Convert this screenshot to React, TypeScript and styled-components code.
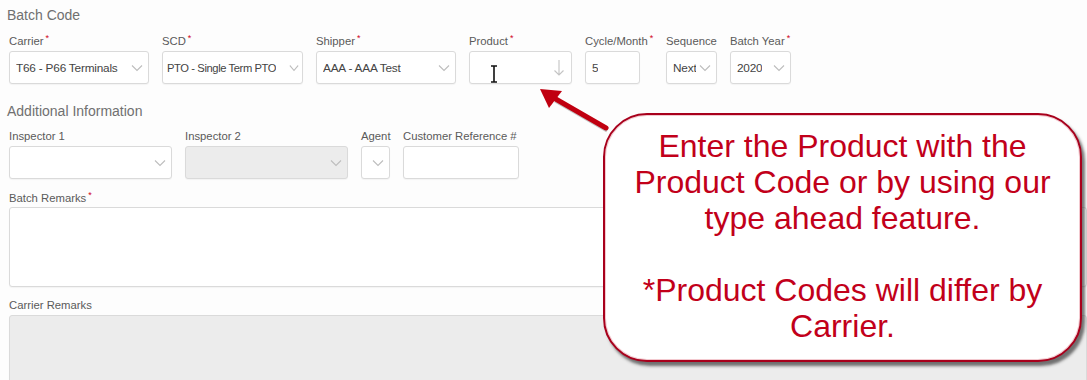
import styled, { createGlobalStyle } from "styled-components";

const GlobalStyle = createGlobalStyle`
  html, body {
    margin: 0;
    padding: 0;
    background: #fdfdfd;
  }
  body {
    font-family: "Liberation Sans", Arial, sans-serif;
  }
`;

const Page = styled.div`
  position: relative;
  width: 1087px;
  height: 380px;
  overflow: hidden;
  box-sizing: border-box;
  padding: 6px 0 0 9px;
  background: #fdfdfd;
`;

const SectionTitle = styled.div<{ $top: number }>`
  margin: ${(p) => p.$top}px 0 0 -2px;
  font-size: 14px;
  line-height: 18px;
  color: #707070;
`;

const Row = styled.div<{ $top: number }>`
  display: flex;
  gap: 13px;
  margin-top: ${(p) => p.$top}px;
`;

const Field = styled.div<{ $w: number }>`
  width: ${(p) => p.$w}px;
  display: flex;
  flex-direction: column;
`;

const Block = styled.div<{ $top: number }>`
  display: flex;
  flex-direction: column;
  margin-top: ${(p) => p.$top}px;
`;

const Label = styled.label<{ $gap?: number }>`
  font-size: 11.3px;
  line-height: 14px;
  color: #5a5a5a;
  white-space: nowrap;
  margin-bottom: ${(p) => p.$gap ?? 3}px;
`;

const Req = styled.span`
  color: #d0021b;
  font-size: 9px;
  line-height: 9px;
  vertical-align: top;
  margin-left: 2px;
`;

const Box = styled.div<{ $w?: number; $h?: number; $disabled?: boolean; $tight?: boolean }>`
  position: relative;
  box-sizing: border-box;
  width: ${(p) => (p.$w ? `${p.$w}px` : "100%")};
  height: ${(p) => p.$h ?? 33}px;
  display: flex;
  align-items: center;
  padding: 0 ${(p) => (p.$tight ? 3 : 5)}px 0 ${(p) => (p.$tight ? 4 : 6)}px;
  border: 1px solid #dadada;
  border-radius: 3px;
  background: ${(p) => (p.$disabled ? "#ececec" : "#fff")};
  box-shadow: 0 1px 1px rgba(0, 0, 0, 0.04);
  font-size: ${(p) => (p.$tight ? 11.2 : 11.8)}px;
  color: #444;
`;

const Value = styled.span<{ $tight?: boolean }>`
  flex: 0 1 auto;
  min-width: 0;
  overflow: hidden;
  white-space: nowrap;
  letter-spacing: ${(p) => (p.$tight ? -0.4 : -0.2)}px;
`;

const Caret = styled.svg`
  flex-shrink: 0;
  margin-left: auto;
`;

const Cursor = styled.svg`
  position: absolute;
  left: 20px;
  top: 13px;
`;

const Arrow = styled.svg`
  position: absolute;
  left: 530px;
  top: 80px;
`;

const Callout = styled.div`
  position: absolute;
  left: 603px;
  top: 113px;
  width: 479px;
  height: 249px;
  box-sizing: border-box;
  padding-top: 13px;
  border: 2px solid #a8001c;
  border-radius: 44px;
  background: #fff;
  box-shadow: 3px 4px 3px rgba(60, 60, 60, 0.7), inset 0 0 0 1px #f3c9cf;
  text-align: center;
  color: #c2001a;
  font-size: 32px;
  line-height: 36px;
`;

const Chevron = ({ w = 12 }: { w?: number }) => (
  <Caret width={w} height="8" viewBox="0 0 12 8" preserveAspectRatio="none">
    <path d="M1 1.5 L6 6.5 L11 1.5" fill="none" stroke="#bdbdbd" strokeWidth="1.1" />
  </Caret>
);

const DownArrow = () => (
  <Caret width="12" height="18" viewBox="0 0 12 18" style={{ marginRight: 1 }}>
    <path d="M6 1 V16 M1.5 11.5 L6 16 L10.5 11.5" fill="none" stroke="#c4c4c4" strokeWidth="1.1" />
  </Caret>
);

type SelectProps = {
  label: string;
  w: number;
  box?: number;
  value?: string;
  req?: boolean;
  disabled?: boolean;
  tight?: boolean;
};

const Select = ({ label, w, box, value, req, disabled, tight }: SelectProps) => (
  <Field $w={w}>
    <Label>
      {label}
      {req && <Req>*</Req>}
    </Label>
    <Box $w={box} $disabled={disabled} $tight={tight}>
      {value && <Value $tight={tight}>{value}</Value>}
      <Chevron w={tight ? 10 : 12} />
    </Box>
  </Field>
);

export default function App() {
  return (
    <>
      <GlobalStyle />
      <Page>
        <SectionTitle $top={0}>Batch Code</SectionTitle>
        <Row $top={10}>
          <Select label="Carrier" req w={140} value="T66 - P66 Terminals" />
          <Select label="SCD" req w={141} value="PTO - Single Term PTO" tight />
          <Select label="Shipper" req w={140} value="AAA - AAA Test" />
          <Field $w={103}>
            <Label>
              Product<Req>*</Req>
            </Label>
            <Box>
              <Cursor width="8" height="18" viewBox="0 0 8 18">
                <path d="M1 1 H7 M4 1 V17 M1 17 H7" fill="none" stroke="#111" strokeWidth="1.6" />
              </Cursor>
              <DownArrow />
            </Box>
          </Field>
          <Field $w={68}>
            <Label>
              Cycle/Month<Req>*</Req>
            </Label>
            <Box $w={55}>
              <Value>5</Value>
            </Box>
          </Field>
          <Select label="Sequence" w={51} value="Next" />
          <Select label="Batch Year" req w={61} value="2020" />
        </Row>

        <SectionTitle $top={18}>Additional Information</SectionTitle>
        <Row $top={9}>
          <Select label="Inspector 1" w={163} />
          <Select label="Inspector 2" w={163} disabled />
          <Select label="Agent" w={29} />
          <Field $w={116}>
            <Label>Customer Reference #</Label>
            <Box />
          </Field>
        </Row>

        <Block $top={12}>
          <Label $gap={2}>
            Batch Remarks<Req>*</Req>
          </Label>
          <Box $h={80} />
        </Block>

        <Block $top={11}>
          <Label>Carrier Remarks</Label>
          <Box $h={90} $disabled />
        </Block>

        <Arrow width="90" height="60" viewBox="0 0 90 60">
          <g transform="translate(1.5 2)" opacity="0.35">
            <path d="M76 48 L24 18" stroke="#555" strokeWidth="5" />
          </g>
          <path d="M76 48 L24 18" stroke="#c00010" strokeWidth="5" strokeLinecap="round" />
          <polygon points="10,9 32,11 19,28" fill="#c00010" />
        </Arrow>

        <Callout>
          Enter the Product with the
          <br />
          Product Code or by using our
          <br />
          type ahead feature.
          <br />
          <br />
          *Product Codes will differ by
          <br />
          Carrier.
        </Callout>
      </Page>
    </>
  );
}
